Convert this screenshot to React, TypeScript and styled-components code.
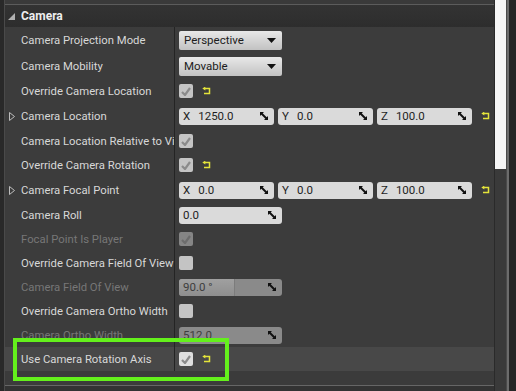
import React from "react";
import styled, { createGlobalStyle } from "styled-components";

const GlobalStyle = createGlobalStyle`
  html, body {
    margin: 0;
    padding: 0;
    background: #2a2a2a;
  }
  body {
    font-family: Roboto, "Liberation Sans", sans-serif;
  }
`;

const Frame = styled.div`
  position: relative;
  width: 516px;
  height: 391px;
  display: flex;
  overflow: hidden;
  background: #2a2a2a;
`;

const LeftEdge = styled.div`
  width: 4px;
  background: #292929;
  border-right: 1px solid #4a4a4a;
`;

const Panel = styled.div`
  width: 489px;
  display: flex;
  flex-direction: column;
  background: #3c3c3c;
`;

const TopStrip = styled.div`
  height: 4px;
  background: #3a3a3a;
  border-bottom: 1px solid #5c5c5c;
`;

const Header = styled.div`
  height: 22px;
  display: flex;
  align-items: center;
  gap: 6px;
  padding-left: 3px;
  background: linear-gradient(#333333, #2d2d2d);
  color: #eeeeee;
  font-size: 12px;
  font-weight: 700;
`;

const Row = styled.div<{ $h: number; $hl?: boolean }>`
  height: ${(p) => p.$h}px;
  display: grid;
  grid-template-columns: 170px 1fr;
  background: ${(p) => (p.$hl ? "#484848" : "transparent")};
`;

const LabelCell = styled.div<{ $dim?: boolean }>`
  display: flex;
  align-items: center;
  padding-left: 4px;
  border-right: 1px solid #242424;
  overflow: hidden;
  white-space: nowrap;
  font-size: 11.3px;
  color: ${(p) => (p.$dim ? "#777777" : "#d8d8d8")};
`;

const Expander = styled.span`
  width: 12px;
  flex: none;
  display: flex;
  align-items: center;
`;

const ValueCell = styled.div`
  display: flex;
  align-items: center;
  padding-left: 4px;
  gap: 4px;
`;

const Dropdown = styled.div`
  width: 103px;
  height: 19px;
  box-sizing: border-box;
  display: flex;
  align-items: center;
  justify-content: space-between;
  padding: 0 6px 0 5px;
  border-radius: 2px;
  background: linear-gradient(#e8e8e8, #c2c2c2);
  color: #1c1c1c;
  font-size: 11.5px;
`;

const Field = styled.div<{ $w: number; $dim?: boolean }>`
  position: relative;
  width: ${(p) => p.$w}px;
  height: 17px;
  box-sizing: border-box;
  display: flex;
  align-items: center;
  gap: 8px;
  padding: 0 6px 0 4px;
  border-radius: 3px;
  overflow: hidden;
  background: ${(p) => (p.$dim ? "#8a8a8a" : "#dadada")};
  color: ${(p) => (p.$dim ? "#3e3e3e" : "#1e1e1e")};
  font-size: 11.5px;
`;

const FieldText = styled.span`
  flex: 1;
  position: relative;
`;

const Fill = styled.div`
  position: absolute;
  left: 0;
  top: 0;
  bottom: 0;
  background: linear-gradient(#a0a0a0, #8e8e8e);
  border-right: 1px solid #7c7c7c;
`;

const Check = styled.div<{ $dim?: boolean; $bright?: boolean }>`
  width: 14px;
  height: 14px;
  border-radius: 2px;
  display: flex;
  align-items: center;
  justify-content: center;
  background: ${(p) => (p.$dim ? "#858585" : p.$bright ? "#dedede" : "#c4c4c4")};
`;

const ResetGap = styled.span`
  display: flex;
  margin-left: 5px;
`;

const Bottom = styled.div`
  flex: 1;
  display: flex;
  flex-direction: column;
`;

const BottomFill = styled.div`
  height: 14px;
  background: #3b3b3b;
  border-bottom: 1px solid #666666;
`;

const BottomDark = styled.div`
  flex: 1;
  background: #333333;
`;

const ScrollTrack = styled.div`
  width: 11px;
  border-left: 1px solid #2a2a2a;
  background: #3a3a3a;
  border-right: 1px solid #4a4a4a;
`;

const Thumb = styled.div`
  height: 169px;
  background: #f6f6f6;
`;

const Gutter = styled.div`
  flex: 1;
  background: #262626;
  border-left: 2px solid #6c6c6c;
`;

const Highlight = styled.div`
  position: absolute;
  left: 13px;
  top: 338px;
  width: 216px;
  height: 43px;
  box-sizing: border-box;
  border: 4px solid #64f01c;
  pointer-events: none;
`;

const ResetIcon = () => (
  <svg width="9" height="8" viewBox="0 0 9 8">
    <path d="M3 1.5 H7.5 V6.5 H2" fill="none" stroke="#e4e43a" strokeWidth="1.5" />
    <polygon points="0.3,1.5 3.3,-0.5 3.3,3.5" fill="#e4e43a" />
  </svg>
);

const DragIcon = () => (
  <svg width="8" height="8" viewBox="0 0 8 8">
    <path d="M0 0 H4 L0 4 Z M8 8 H4 L8 4 Z" fill="#111" />
    <path d="M1 1 L7 7" stroke="#111" strokeWidth="2" />
  </svg>
);

const Caret = () => (
  <svg width="9" height="5" viewBox="0 0 9 5">
    <polygon points="0,0 9,0 4.5,5" fill="#111" />
  </svg>
);

const Tick = ({ color }: { color: string }) => (
  <svg width="10" height="9" viewBox="0 0 10 9">
    <path d="M1 5 L4 8 L9 1" fill="none" stroke={color} strokeWidth="2.2" />
  </svg>
);

const ExpandArrow = () => (
  <svg width="6" height="9" viewBox="0 0 6 9">
    <polygon points="0.5,0.5 5.5,4.5 0.5,8.5" fill="none" stroke="#bdbdbd" strokeWidth="1" />
  </svg>
);

const CollapseArrow = () => (
  <svg width="7" height="7" viewBox="0 0 7 7">
    <polygon points="7,0 7,7 0,7" fill="#b0b0b0" />
  </svg>
);

const Label = ({ text, dim, expand }: { text: string; dim?: boolean; expand?: boolean }) => (
  <LabelCell $dim={dim}>
    <Expander>{expand && <ExpandArrow />}</Expander>
    {text}
  </LabelCell>
);

const Vec = ({ axis, value }: { axis: string; value: string }) => (
  <Field $w={95}>
    <span>{axis}</span>
    <FieldText>{value}</FieldText>
    <DragIcon />
  </Field>
);

const App: React.FC = () => {
  return (
    <>
      <GlobalStyle />
      <Frame>
        <LeftEdge />
        <Panel>
          <TopStrip />
          <Header>
            <CollapseArrow />
            Camera
          </Header>

          <Row $h={26}>
            <Label text="Camera Projection Mode" />
            <ValueCell>
              <Dropdown>
                Perspective
                <Caret />
              </Dropdown>
            </ValueCell>
          </Row>
          <Row $h={26}>
            <Label text="Camera Mobility" />
            <ValueCell>
              <Dropdown>
                Movable
                <Caret />
              </Dropdown>
            </ValueCell>
          </Row>
          <Row $h={24}>
            <Label text="Override Camera Location" />
            <ValueCell>
              <Check>
                <Tick color="#8a8a8a" />
              </Check>
              <ResetGap>
                <ResetIcon />
              </ResetGap>
            </ValueCell>
          </Row>
          <Row $h={26}>
            <Label text="Camera Location" expand />
            <ValueCell>
              <Vec axis="X" value="1250.0" />
              <Vec axis="Y" value="0.0" />
              <Vec axis="Z" value="100.0" />
              <ResetGap>
                <ResetIcon />
              </ResetGap>
            </ValueCell>
          </Row>
          <Row $h={24}>
            <Label text="Camera Location Relative to View" />
            <ValueCell>
              <Check>
                <Tick color="#8a8a8a" />
              </Check>
            </ValueCell>
          </Row>
          <Row $h={24}>
            <Label text="Override Camera Rotation" />
            <ValueCell>
              <Check>
                <Tick color="#8a8a8a" />
              </Check>
              <ResetGap>
                <ResetIcon />
              </ResetGap>
            </ValueCell>
          </Row>
          <Row $h={26}>
            <Label text="Camera Focal Point" expand />
            <ValueCell>
              <Vec axis="X" value="0.0" />
              <Vec axis="Y" value="0.0" />
              <Vec axis="Z" value="100.0" />
              <ResetGap>
                <ResetIcon />
              </ResetGap>
            </ValueCell>
          </Row>
          <Row $h={24}>
            <Label text="Camera Roll" />
            <ValueCell>
              <Field $w={103}>
                <FieldText>0.0</FieldText>
                <DragIcon />
              </Field>
            </ValueCell>
          </Row>
          <Row $h={24}>
            <Label text="Focal Point Is Player" dim />
            <ValueCell>
              <Check $dim>
                <Tick color="#6c6c6c" />
              </Check>
            </ValueCell>
          </Row>
          <Row $h={24}>
            <Label text="Override Camera Field Of View" />
            <ValueCell>
              <Check />
            </ValueCell>
          </Row>
          <Row $h={24}>
            <Label text="Camera Field Of View" dim />
            <ValueCell>
              <Field $w={103} $dim>
                <Fill style={{ width: `${(90 / 170) * 100}%` }} />
                <FieldText>90.0 °</FieldText>
                <DragIcon />
              </Field>
            </ValueCell>
          </Row>
          <Row $h={24}>
            <Label text="Override Camera Ortho Width" />
            <ValueCell>
              <Check />
            </ValueCell>
          </Row>
          <Row $h={24}>
            <Label text="Camera Ortho Width" dim />
            <ValueCell>
              <Field $w={103} $dim>
                <FieldText>512.0</FieldText>
                <DragIcon />
              </Field>
            </ValueCell>
          </Row>
          <Row $h={24} $hl>
            <Label text="Use Camera Rotation Axis" />
            <ValueCell>
              <Check $bright>
                <Tick color="#8a8a8a" />
              </Check>
              <ResetGap>
                <ResetIcon />
              </ResetGap>
            </ValueCell>
          </Row>

          <Bottom>
            <BottomFill />
            <BottomDark />
          </Bottom>
        </Panel>
        <ScrollTrack>
          <Thumb />
        </ScrollTrack>
        <Gutter />
        <Highlight />
      </Frame>
    </>
  );
};

export default App;
